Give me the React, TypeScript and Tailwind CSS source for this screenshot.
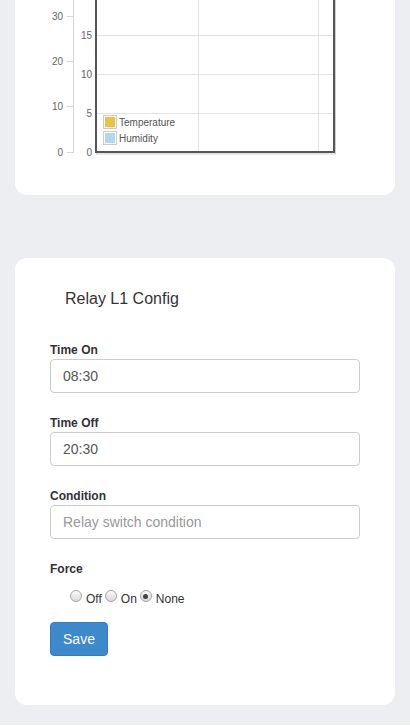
import React from 'react'

const outerTicks = [
  { y: 16, label: '30' },
  { y: 61, label: '20' },
  { y: 106, label: '10' },
  { y: 152, label: '0' },
]

const innerTicks = [
  { y: 35, label: '15' },
  { y: 74, label: '10' },
  { y: 113, label: '5' },
  { y: 152, label: '0' },
]

function SensorChart() {
  // drawn in page coordinates, shifted into the card
  return (
    <svg width="381" height="360" className="block">
      <g transform="translate(-15,200)" fontFamily="'Liberation Sans', Arial, sans-serif" fontSize="10" fill="#666">
        <line x1="73.5" y1="-190" x2="73.5" y2="153" stroke="#d6d6d6" />
        {outerTicks.map((t) => (
          <g key={t.label + t.y}>
            <line x1="67" y1={t.y + 0.5} x2="73" y2={t.y + 0.5} stroke="#d6d6d6" />
            <text x="63" y={t.y + 3.5} textAnchor="end">
              {t.label}
            </text>
          </g>
        ))}

        {[35, 74, 113].map((y) => (
          <line key={y} x1="97" y1={y + 0.5} x2="334" y2={y + 0.5} stroke="#e2e2e2" />
        ))}
        <line x1="198.5" y1="-180" x2="198.5" y2="152" stroke="#e2e2e2" />
        <line x1="318.5" y1="-180" x2="318.5" y2="152" stroke="#e2e2e2" />

        <rect x="96.5" y="-180" width="239" height="334" fill="none" stroke="#cfcfcf" />
        <rect x="96" y="-181" width="238" height="333" fill="none" stroke="#555" strokeWidth="2" />

        {innerTicks.map((t) => (
          <text key={'i' + t.label} x="92" y={t.y + 3.5} textAnchor="end">
            {t.label}
          </text>
        ))}

        <rect x="103.5" y="115.5" width="13" height="13" fill="#fff" stroke="#ccc" />
        <rect x="105" y="117" width="10" height="10" fill="#edc240" />
        <text x="119" y="126" fill="#545454">
          Temperature
        </text>
        <rect x="103.5" y="131.5" width="13" height="13" fill="#fff" stroke="#ccc" />
        <rect x="105" y="133" width="10" height="10" fill="#afd8f8" />
        <text x="119" y="142" fill="#545454">
          Humidity
        </text>
      </g>
    </svg>
  )
}

function Field({ label, value, placeholder }: { label: string; value?: string; placeholder?: string }) {
  return (
    <div className="mb-[21px]">
      <div className="pt-[1px] text-[12px] font-bold leading-[17px] text-[#333]">{label}</div>
      <div
        className={
          'flex h-[34px] items-center rounded-[4px] border border-[#ccc] bg-white px-[12px] text-[14px] ' +
          (value ? 'text-[#555]' : 'text-[#999]')
        }
      >
        {value || placeholder}
      </div>
    </div>
  )
}

function Radio({ checked, label }: { checked?: boolean; label: string }) {
  return (
    <span className="flex items-center">
      <span className="mr-[4px] mt-[-6px] flex h-[12px] w-[12px] items-center justify-center rounded-full border border-[#a3a3a3] bg-gradient-to-b from-[#fafafa] to-[#d9d9d9]">
        {checked && <span className="h-[5px] w-[5px] rounded-full bg-[#444]" />}
      </span>
      <span className="mr-[3px] text-[12px] leading-[16px] text-[#333]">{label}</span>
    </span>
  )
}

export default function App() {
  return (
    <div className="min-h-[726px] bg-[#edeef1] px-[15px] pb-[20px] font-['Liberation_Sans',Arial,sans-serif] text-[#333]">
      <div className="mt-[-200px] rounded-[12px] bg-white pb-[35px]">
        <SensorChart />
      </div>

      <div className="mt-[63px] rounded-[12px] bg-white px-[35px] pb-[49px] pt-[32px]">
        <h4 className="pl-[15px] text-[16px] leading-[18px] text-[#333]">Relay L1 Config</h4>
        <div className="mt-[33px]">
          <Field label="Time On" value="08:30" />
          <Field label="Time Off" value="20:30" />
          <Field label="Condition" placeholder="Relay switch condition" />
          <div className="pt-[1px] text-[12px] font-bold leading-[17px] text-[#333]">Force</div>
          <div className="mt-[13px] flex items-center pl-[20px]">
            <Radio label="Off" />
            <Radio label="On" />
            <Radio label="None" checked />
          </div>
          <button className="mt-[15px] h-[34px] w-[58px] rounded-[4px] border border-[#357ebd] bg-[#3c89cb] text-[14px] text-white">
            Save
          </button>
        </div>
      </div>
    </div>
  )
}
